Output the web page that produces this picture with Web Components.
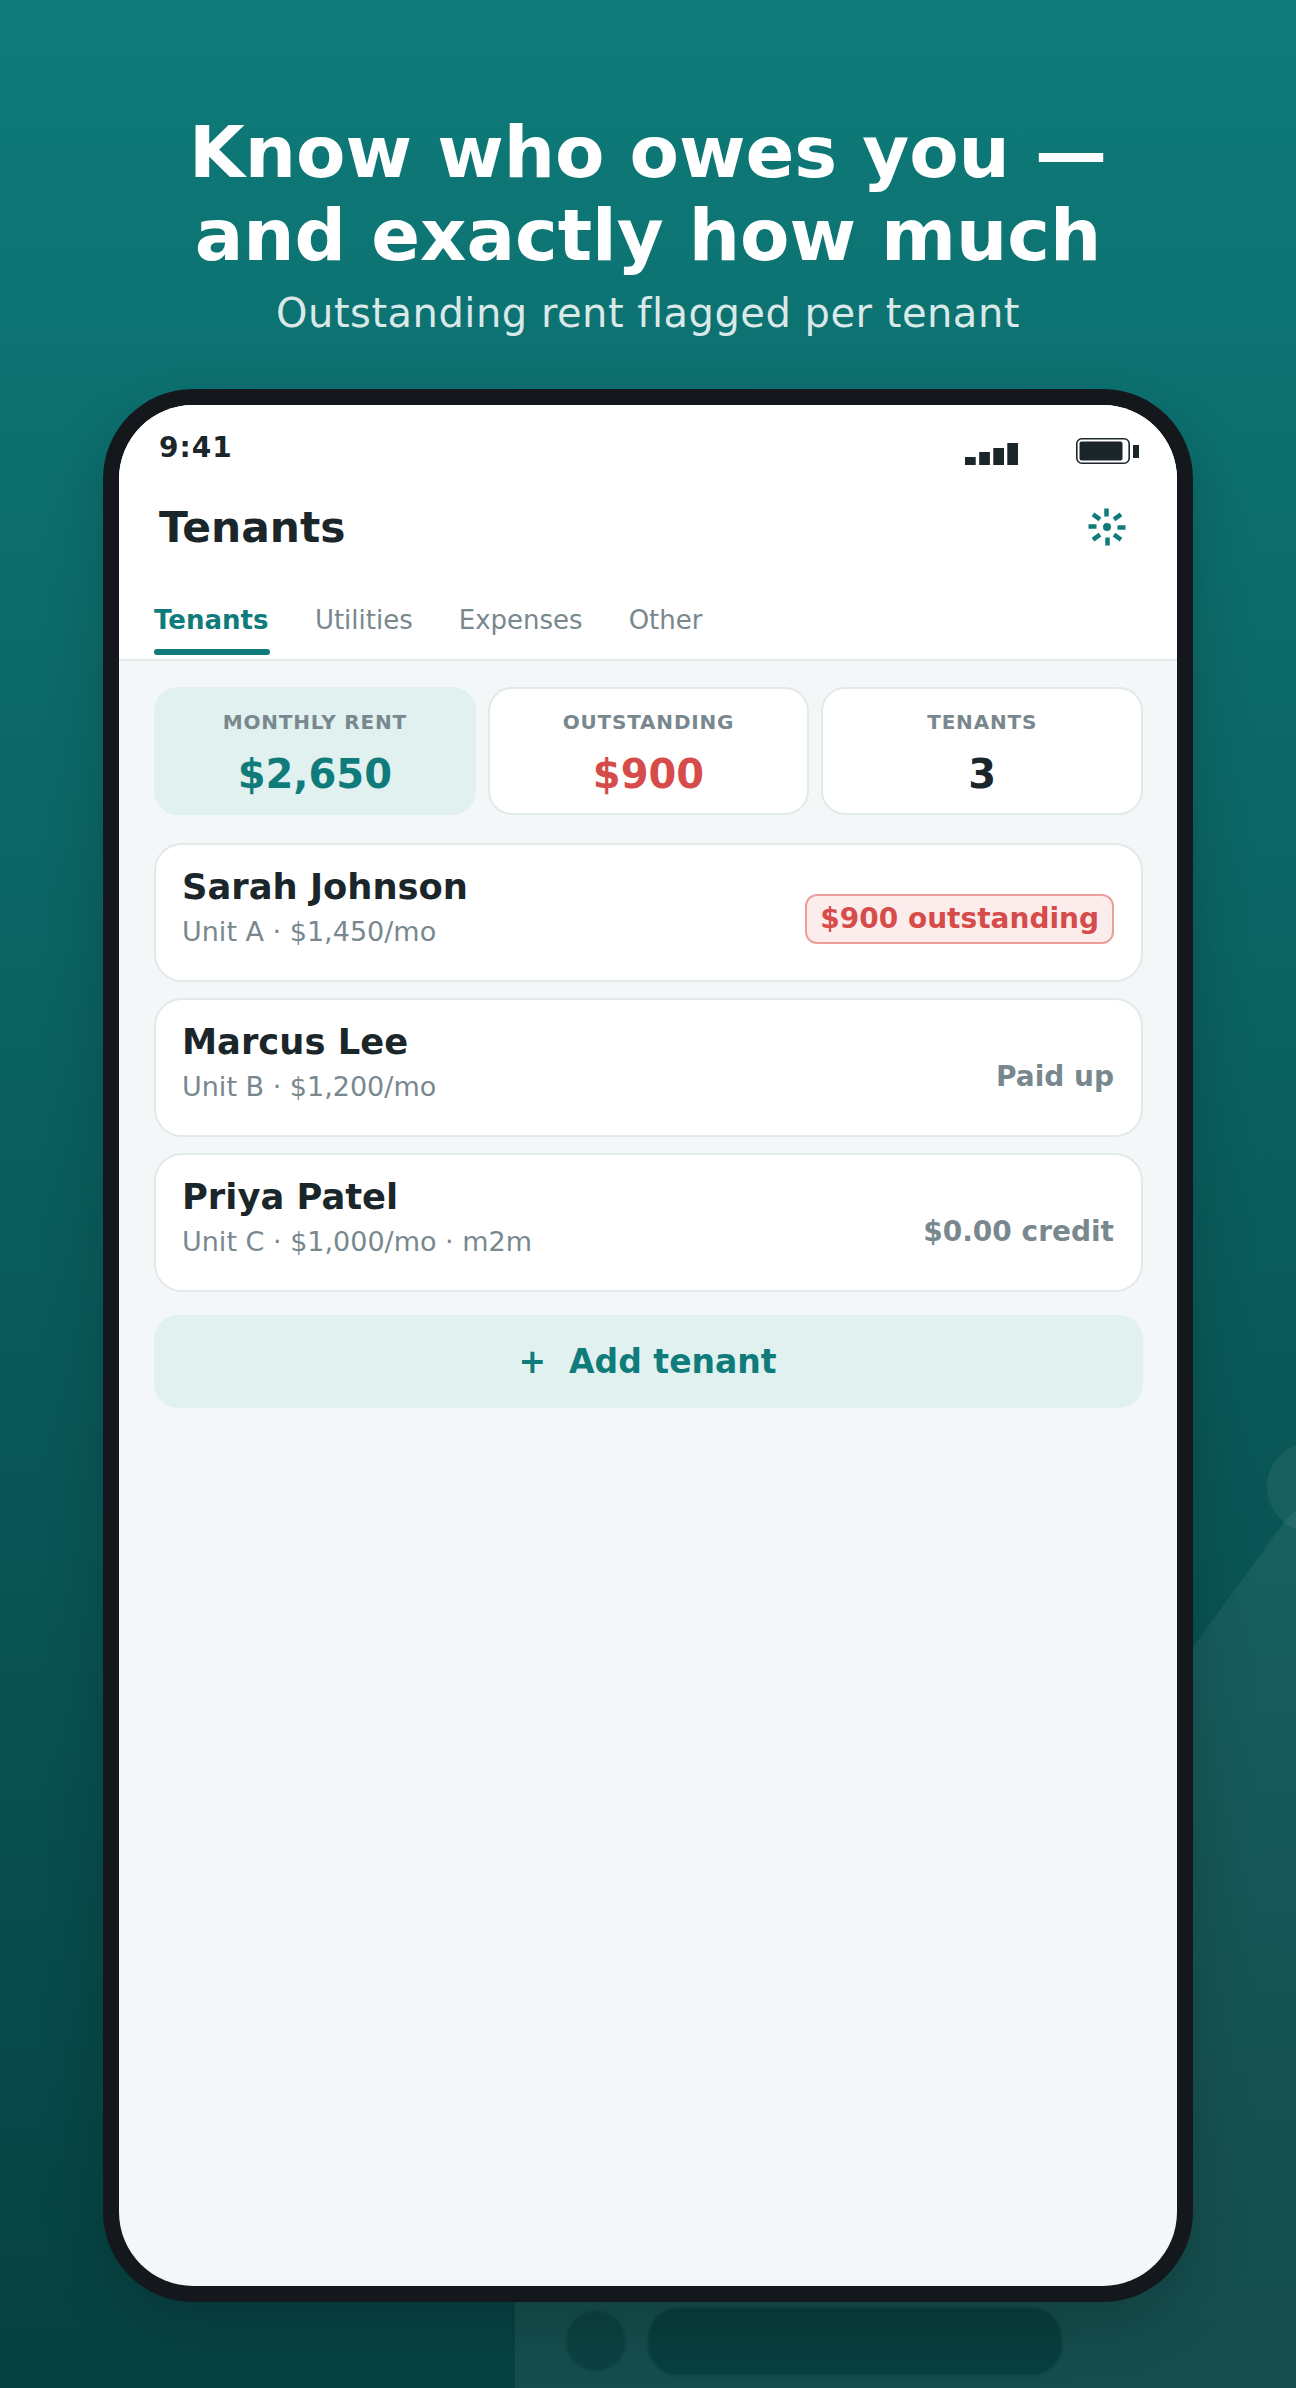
<!DOCTYPE html>
<html lang="en">
<head>
<meta charset="utf-8">
<title>Tenants</title>
<style>
  html, body { margin: 0; padding: 0; }
  body { font-family: "DejaVu Sans", sans-serif; }
</style>
</head>
<body>
<promo-page>
  <span slot="title">Know who owes you —<br>and exactly how much</span>
  <span slot="subtitle">Outstanding rent flagged per tenant</span>
  <phone-frame>
    <status-bar time="9:41"></status-bar>
    <app-header title="Tenants"></app-header>
    <tab-bar tabs="Tenants,Utilities,Expenses,Other"></tab-bar>
    <main-panel>
      <stat-row>
        <stat-card label="MONTHLY RENT" value="$2,650" tone="teal"></stat-card>
        <stat-card label="OUTSTANDING" value="$900" tone="red"></stat-card>
        <stat-card label="TENANTS" value="3"></stat-card>
      </stat-row>
      <tenant-row name="Sarah Johnson" detail="Unit A · $1,450/mo" status="$900 outstanding" flagged></tenant-row>
      <tenant-row name="Marcus Lee" detail="Unit B · $1,200/mo" status="Paid up"></tenant-row>
      <tenant-row name="Priya Patel" detail="Unit C · $1,000/mo · m2m" status="$0.00 credit"></tenant-row>
      <add-button>+&nbsp; Add tenant</add-button>
    </main-panel>
  </phone-frame>
</promo-page>

<script>
class PromoPage extends HTMLElement {
  constructor() {
    super();
    this.attachShadow({ mode: "open" });
    this.shadowRoot.innerHTML = `
      <style>
        :host { display: block; position: relative; width: 1296px; height: 2388px; overflow: hidden;
          background: linear-gradient(180deg, #0e7b7a 0%, #0a5a5a 55%, #074141 100%); }
        /* faint shapes behind the phone */
        .decor { position: absolute; inset: 0; width: 100%; height: 100%; }
        .content { position: relative; display: flex; flex-direction: column; align-items: center; padding-top: 111px; }
        h1 { margin: 0; color: #fff; font-size: 72px; line-height: 83px; font-weight: 700; text-align: center; }
        p { margin: 11px 0 0; color: rgba(255,255,255,.85); font-size: 40px; line-height: 50px; letter-spacing: .5px; text-align: center; }
        .phone { margin-top: 51px; }
      </style>
      <svg class="decor" viewBox="0 0 1296 2388">
        <polygon points="515,2388 515,2290 1193,1647 1285,1521 1296,1510 1296,2388" fill="#fff" fill-opacity=".06"/>
        <circle cx="1312" cy="1487" r="45" fill="#fff" fill-opacity=".06"/>
        <g style="filter: blur(1px)">
          <circle cx="596" cy="2341" r="30" fill="#063b3b" fill-opacity=".6"/>
          <rect x="648" y="2308" width="414" height="67" rx="30" fill="#063b3b" fill-opacity=".8"/>
        </g>
      </svg>
      <div class="content">
        <h1><slot name="title"></slot></h1>
        <p><slot name="subtitle"></slot></p>
        <div class="phone"><slot></slot></div>
      </div>`;
  }
}

class PhoneFrame extends HTMLElement {
  constructor() {
    super();
    this.attachShadow({ mode: "open" });
    this.shadowRoot.innerHTML = `
      <style>
        :host { display: block; width: 1090px; height: 1913px; box-sizing: border-box;
          background: #14181d; border-radius: 90px; padding: 16px;
          box-shadow: 0 20px 60px rgba(0,0,0,.18); }
        .screen { height: 100%; border-radius: 74px; overflow: hidden; background: #f3f7f8;
          display: flex; flex-direction: column; }
      </style>
      <div class="screen"><slot></slot></div>`;
  }
}

class StatusBar extends HTMLElement {
  constructor() {
    super();
    this.attachShadow({ mode: "open" });
    this.shadowRoot.innerHTML = `
      <style>
        :host { display: flex; justify-content: space-between; background: #fff; height: 76px;
          padding: 0 38px 0 40px; color: #1b262b; }
        .time { font-size: 28px; font-weight: 700; line-height: 34px; letter-spacing: 1px; padding-top: 26px; }
        .icons { display: flex; align-items: flex-start; padding-top: 33px; }
        .signal { margin-right: 58px; margin-top: 5px; }
      </style>
      <span class="time">${this.getAttribute("time")}</span>
      <div class="icons">
        <svg class="signal" width="53" height="22" viewBox="0 0 53 22" fill="#1b262b">
          <rect x="0" y="14" width="10.700" height="8"/><rect x="14.200" y="9" width="10.700" height="13"/>
          <rect x="28.300" y="5" width="10.700" height="17"/><rect x="42.300" y="0" width="10.700" height="22"/>
        </svg>
        <svg width="63" height="26" viewBox="0 0 63 26">
          <rect x=".8" y=".8" width="52.400" height="24.400" rx="5" fill="#fff" stroke="#1b262b" stroke-width="1.600"/>
          <rect x="3.500" y="3.500" width="43" height="19" rx="2" fill="#1b262b"/>
          <rect x="57" y="7" width="6" height="13" fill="#1b262b"/>
        </svg>
      </div>`;
  }
}

class AppHeader extends HTMLElement {
  constructor() {
    super();
    this.attachShadow({ mode: "open" });
    this.shadowRoot.innerHTML = `
      <style>
        :host { display: flex; justify-content: space-between; align-items: center; background: #fff;
          height: 92px; padding: 0 51px 0 40px; }
        h2 { margin: 0; font-size: 42.400px; font-weight: 700; color: #1b262b; }
        svg { display: block; }
      </style>
      <h2>${this.getAttribute("title")}</h2>
      <svg width="38" height="38" viewBox="-19 -19 38 38" fill="none" stroke="#0f7c7b" stroke-width="4.500">
        <circle cx="0" cy="0" r="4" fill="#0f7c7b" stroke="none"/>
        <path d="M-.5-18.500v8M.5 10.500v8M-18.500-.5h8M10.500 .5h8M-14-12.700l7 5M14-12.700l-7 5M-14 12.700l7-5M14 12.700l-7-5"/>
      </svg>`;
  }
}

class TabBar extends HTMLElement {
  constructor() {
    super();
    this.attachShadow({ mode: "open" });
    const tabs = this.getAttribute("tabs").split(",");
    this.shadowRoot.innerHTML = `
      <style>
        :host { display: flex; gap: 46px; background: #fff; height: 88px; box-sizing: border-box;
          padding: 0 35px; border-bottom: 2px solid #e3e8ea; }
        .tab { font-size: 26px; line-height: 32px; padding-top: 31px; height: 82px; box-sizing: border-box;
          color: #78888e; position: relative; }
        .tab.active { color: #0f7c7b; font-weight: 700; margin-right: .5px; }
        .tab.active::after { content: ""; position: absolute; left: 0; right: -2px; bottom: 0; height: 6px;
          border-radius: 3px; background: #0f7c7b; }
      </style>
      ${tabs.map((t, i) => `<span class="tab ${i === 0 ? "active" : ""}">${t}</span>`).join("")}`;
  }
}

class MainPanel extends HTMLElement {
  constructor() {
    super();
    this.attachShadow({ mode: "open" });
    this.shadowRoot.innerHTML = `
      <style>
        :host { display: flex; flex-direction: column; gap: 16px; flex: 1; padding: 26px 34px 26px 35px; }
      </style>
      <slot></slot>`;
  }
}

class StatRow extends HTMLElement {
  constructor() {
    super();
    this.attachShadow({ mode: "open" });
    this.shadowRoot.innerHTML = `
      <style>
        :host { display: grid; grid-template-columns: repeat(3, 1fr); gap: 12px; margin-bottom: 12px; }
      </style>
      <slot></slot>`;
  }
}

class StatCard extends HTMLElement {
  constructor() {
    super();
    this.attachShadow({ mode: "open" });
    const tone = this.getAttribute("tone");
    const valueColor = tone === "teal" ? "#0f7c7b" : tone === "red" ? "#d64c4a" : "#1b262b";
    this.shadowRoot.innerHTML = `
      <style>
        :host { display: block; height: 128px; box-sizing: border-box; border-radius: 24px; text-align: center;
          background: ${tone === "teal" ? "#e0f1ef" : "#fff"};
          border: 2px solid ${tone === "teal" ? "#e0f1ef" : "#e3e8ea"}; padding-top: 20px; }
        .label { font-size: 20px; line-height: 26px; font-weight: 700; letter-spacing: .8px; color: #78888e; }
        .value { font-size: 40px; line-height: 48px; font-weight: 700; margin-top: 15px; color: ${valueColor}; }
      </style>
      <div class="label">${this.getAttribute("label")}</div>
      <div class="value">${this.getAttribute("value")}</div>`;
  }
}

class TenantRow extends HTMLElement {
  constructor() {
    super();
    this.attachShadow({ mode: "open" });
    const flagged = this.hasAttribute("flagged");
    this.shadowRoot.innerHTML = `
      <style>
        :host { display: flex; justify-content: space-between; height: 139px; box-sizing: border-box;
          background: #fff; border: 2px solid #e3e8ea; border-radius: 28px; padding: 20px 27px 21px 26px; }
        .name { font-size: 35.300px; line-height: 44px; font-weight: 700; color: #1b262b; }
        .detail { font-size: 27px; line-height: 32px; margin-top: 7px; color: #78888e; }
        .status { align-self: center; margin-top: 20px; font-size: 28px; line-height: 34px; font-weight: 700; color: #78888e; }
        .status.flag { margin-top: 14px; color: #d64c4a; background: #fdecec; border: 2px solid #ea9f9c; border-radius: 12px;
          padding: 6px 13px; }
      </style>
      <div>
        <div class="name">${this.getAttribute("name")}</div>
        <div class="detail">${this.getAttribute("detail")}</div>
      </div>
      <div class="status ${flagged ? "flag" : ""}">${this.getAttribute("status")}</div>`;
  }
}

class AddButton extends HTMLElement {
  constructor() {
    super();
    this.attachShadow({ mode: "open" });
    this.shadowRoot.innerHTML = `
      <style>
        :host { display: flex; align-items: center; justify-content: center; height: 93px; margin-top: 7px;
          padding-right: 2px; border-radius: 24px; background: #e0f1ef; color: #0f7c7b; font-size: 33px; font-weight: 700; }
      </style>
      <slot></slot>`;
  }
}

customElements.define("promo-page", PromoPage);
customElements.define("phone-frame", PhoneFrame);
customElements.define("status-bar", StatusBar);
customElements.define("app-header", AppHeader);
customElements.define("tab-bar", TabBar);
customElements.define("main-panel", MainPanel);
customElements.define("stat-row", StatRow);
customElements.define("stat-card", StatCard);
customElements.define("tenant-row", TenantRow);
customElements.define("add-button", AddButton);
</script>
</body>
</html>
